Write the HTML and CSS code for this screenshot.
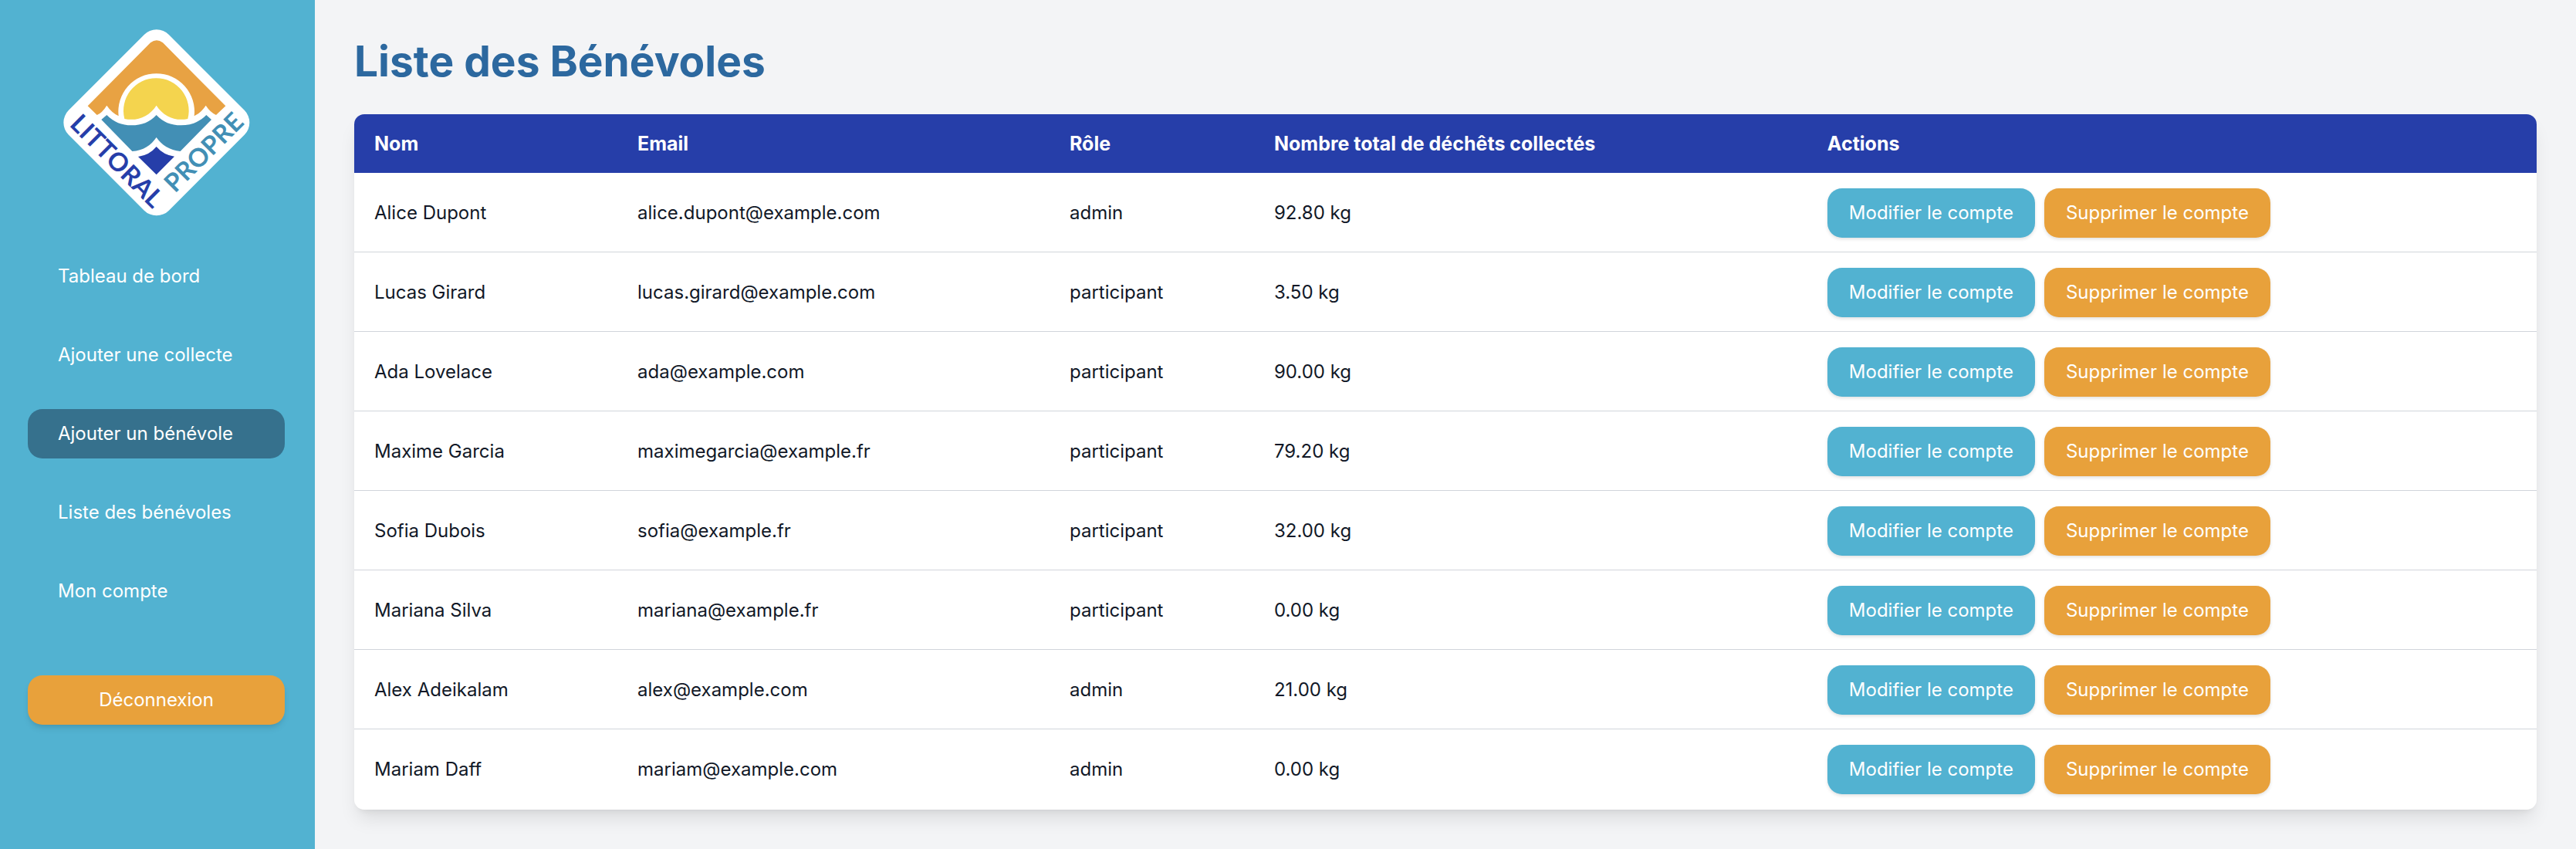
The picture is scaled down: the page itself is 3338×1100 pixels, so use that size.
FILE: index.html
```html
<!DOCTYPE html>
<html lang="fr">
<head>
<meta charset="utf-8">
<meta name="viewport" content="width=device-width, initial-scale=1">
<title>Liste des Bénévoles</title>
<link rel="stylesheet" href="styles.css">
</head>
<body>
<div class="layout">
  <aside class="sidebar">
    <svg class="logo" viewBox="66 54 724 726" role="img" aria-label="Littoral Propre">
      <rect x="152" y="141" width="551" height="551" rx="68" fill="#fff" transform="rotate(45 427.500 416.500)"/>
      <path fill="#e8a243" d="M160 352 404 106Q428 87 452 106L696 352 659 387Q636 376 619 350 602 377 574 391A148 148 0 1 0 280 391Q252 377 234 350 216 379 196 387Z"/>
      <path fill="#f4d44e" d="M303 402A127 127 0 1 1 549 402C500 412 455 393 427 350 399 393 354 412 303 402Z"/>
      <path fill="#428fb5" d="M213 405 234 387C262 415 292 427 330 427 371 427 401 415 427 387 453 415 483 427 523 427 561 427 593 415 621 387L641 405 520 528C479 524 447 504 427 474 407 504 375 526 333 528Z"/>
      <path fill="#263ea9" d="M427 510Q455 543 497 548L427 619 356 549Q400 543 427 510Z"/>
      <text class="logo-text" fill="#263ea9" transform="translate(86 427) rotate(45)">LITTORAL</text>
      <text class="logo-text" fill="#428fb5" transform="translate(499 693) rotate(-45)">PROPRE</text>
    </svg>
    <nav class="menu">
      <a class="menu-link" href="#">Tableau de bord</a>
      <a class="menu-link" href="#">Ajouter une collecte</a>
      <a class="menu-link active" href="#">Ajouter un bénévole</a>
      <a class="menu-link" href="#">Liste des bénévoles</a>
      <a class="menu-link" href="#">Mon compte</a>
    </nav>
    <button class="logout" type="button">Déconnexion</button>
  </aside>
  <main class="content">
    <h1 class="title">Liste des Bénévoles</h1>
    <div class="card">
      <table class="table">
        <colgroup><col class="col-name"><col class="col-email"><col class="col-role"><col class="col-total"><col></colgroup>
        <thead>
          <tr><th scope="col">Nom</th><th scope="col">Email</th><th scope="col">Rôle</th><th scope="col">Nombre total de déchêts collectés</th><th scope="col">Actions</th></tr>
        </thead>
        <tbody>
          <tr><td>Alice Dupont</td><td>alice.dupont@example.com</td><td>admin</td><td>92.80 kg</td><td><div class="actions"><button class="btn edit" type="button">Modifier le compte</button><button class="btn delete" type="button">Supprimer le compte</button></div></td></tr>
          <tr><td>Lucas Girard</td><td>lucas.girard@example.com</td><td>participant</td><td>3.50 kg</td><td><div class="actions"><button class="btn edit" type="button">Modifier le compte</button><button class="btn delete" type="button">Supprimer le compte</button></div></td></tr>
          <tr><td>Ada Lovelace</td><td>ada@example.com</td><td>participant</td><td>90.00 kg</td><td><div class="actions"><button class="btn edit" type="button">Modifier le compte</button><button class="btn delete" type="button">Supprimer le compte</button></div></td></tr>
          <tr><td>Maxime Garcia</td><td>maximegarcia@example.fr</td><td>participant</td><td>79.20 kg</td><td><div class="actions"><button class="btn edit" type="button">Modifier le compte</button><button class="btn delete" type="button">Supprimer le compte</button></div></td></tr>
          <tr><td>Sofia Dubois</td><td>sofia@example.fr</td><td>participant</td><td>32.00 kg</td><td><div class="actions"><button class="btn edit" type="button">Modifier le compte</button><button class="btn delete" type="button">Supprimer le compte</button></div></td></tr>
          <tr><td>Mariana Silva</td><td>mariana@example.fr</td><td>participant</td><td>0.00 kg</td><td><div class="actions"><button class="btn edit" type="button">Modifier le compte</button><button class="btn delete" type="button">Supprimer le compte</button></div></td></tr>
          <tr><td>Alex Adeikalam</td><td>alex@example.com</td><td>admin</td><td>21.00 kg</td><td><div class="actions"><button class="btn edit" type="button">Modifier le compte</button><button class="btn delete" type="button">Supprimer le compte</button></div></td></tr>
          <tr><td>Mariam Daff</td><td>mariam@example.com</td><td>admin</td><td>0.00 kg</td><td><div class="actions"><button class="btn edit" type="button">Modifier le compte</button><button class="btn delete" type="button">Supprimer le compte</button></div></td></tr>
        </tbody>
      </table>
    </div>
  </main>
</div>
</body>
</html>
```
FILE: styles.css
```css
* {
  box-sizing: border-box;
}

body {
  margin: 0;
  background: #f3f4f6;
  color: #111827;
  font-family: Inter, "Liberation Sans", sans-serif;
  font-size: 24px;
  line-height: 38px;
}

button {
  border: 0;
  font: inherit;
  color: #fff;
  cursor: pointer;
}

.layout {
  display: flex;
  min-height: 100vh;
}

.sidebar {
  flex: none;
  display: flex;
  flex-direction: column;
  width: 408px;
  padding: 38px 39px 38px 36px;
  background: #52b2d1;
}

.logo {
  align-self: center;
  width: 242px;
  height: 242px;
}

.logo-text {
  font-family: Lato, sans-serif;
  font-size: 99px;
  font-weight: 700;
}

.menu {
  display: flex;
  flex-direction: column;
  gap: 38px;
  margin-top: 46px;
}

.menu-link {
  padding: 13px 39px;
  border-radius: 19px;
  color: #fff;
  text-decoration: none;
}

.menu-link.active {
  background: #36718d;
}

.logout {
  height: 64px;
  margin-top: 77px;
  border-radius: 19px;
  background: #e8a13b;
  box-shadow: 0 6px 10px -2px rgb(0 0 0 / 10%), 0 3px 6px -3px rgb(0 0 0 / 10%);
}

.content {
  flex: 1;
  min-width: 0;
  padding: 47px 51px 50px;
}

.title {
  margin: 0 0 37px;
  color: #2c689f;
  font-size: 55px;
  font-weight: 700;
  line-height: 64px;
}

.card {
  overflow: hidden;
  border-radius: 13px;
  background: #fff;
  box-shadow: 0 16px 24px -5px rgb(0 0 0 / 10%), 0 6px 10px -6px rgb(0 0 0 / 10%);
}

.table {
  width: 100%;
  table-layout: fixed;
  border-spacing: 0;
}

.col-name {
  width: 12.06%;
}

.col-email {
  width: 19.8%;
}

.col-role {
  width: 9.37%;
}

.col-total {
  width: 25.35%;
}

th {
  padding: 19px 26px;
  background: #263ea9;
  color: #fff;
  font-size: 25px;
  font-weight: 700;
  text-align: left;
}

td {
  padding: 20px 26px 18px;
  border-bottom: 1px solid #d1d5db;
}

tr:last-child td {
  padding-bottom: 20px;
  border-bottom: 0;
}

.actions {
  display: flex;
  gap: 12px;
}

.btn {
  padding: 13px 28px;
  border-radius: 19px;
  box-shadow: 0 2px 4px rgb(0 0 0 / 12%);
  white-space: nowrap;
}

.edit {
  background: #52b2d1;
}

.delete {
  background: #e8a13b;
}
```
